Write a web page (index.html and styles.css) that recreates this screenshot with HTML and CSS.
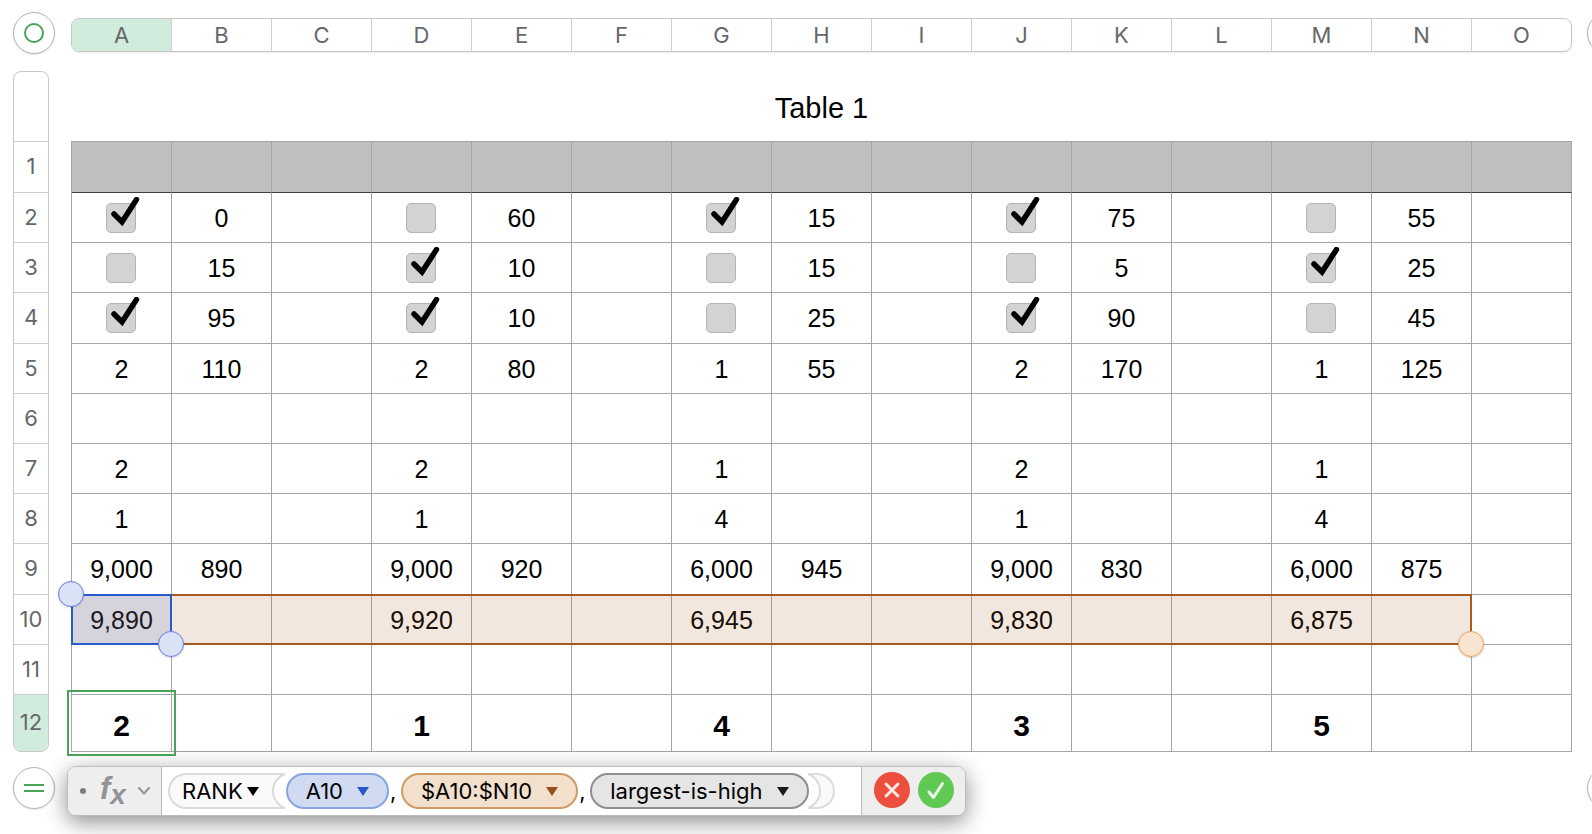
FILE: index.html
```html
<!DOCTYPE html>
<html lang="en">
<head>
<meta charset="utf-8">
<title>Table 1</title>
<link rel="stylesheet" href="styles.css">
</head>
<body>
<svg class="defs" aria-hidden="true">
  <symbol id="tick" viewBox="0 0 36 36"><path d="M8 17L16 25L30.500 2.500" fill="none" stroke="#000" stroke-width="5.500" stroke-linecap="round"/></symbol>
  <symbol id="caret" viewBox="0 0 12 9"><path d="M0 0H12L6 9Z" fill="currentColor"/></symbol>
</svg>
<main class="sheet">
  <button class="corner" aria-label="Select table"><svg width="20" height="20" viewBox="0 0 20 20"><circle cx="10" cy="10" r="9" fill="none" stroke="#4ba35a" stroke-width="2"/></svg></button>
  <div class="columns">
    <span class="active">A</span><span>B</span><span>C</span><span>D</span><span>E</span><span>F</span><span>G</span><span>H</span><span>I</span><span>J</span><span>K</span><span>L</span><span>M</span><span>N</span><span>O</span>
  </div>
  <div class="edge"><button class="corner" aria-label="Add column"></button></div>

  <div class="rows">
    <span class="title-slot"></span><span class="r51">1</span><span>2</span><span>3</span><span class="r51">4</span><span>5</span><span>6</span><span>7</span><span>8</span><span class="r51">9</span><span>10</span><span>11</span><span class="active">12</span>
  </div>
  <table class="grid">
    <caption>Table 1</caption>
    <thead>
      <tr class="r51"><th></th><th></th><th></th><th></th><th></th><th></th><th></th><th></th><th></th><th></th><th></th><th></th><th></th><th></th><th></th></tr>
    </thead>
    <tbody>
      <tr>
        <td class="tick"><label><input type="checkbox" checked aria-label="A2"><svg><use href="#tick"/></svg></label></td><td>0</td><td></td>
        <td class="tick"><label><input type="checkbox" aria-label="D2"><svg><use href="#tick"/></svg></label></td><td>60</td><td></td>
        <td class="tick"><label><input type="checkbox" checked aria-label="G2"><svg><use href="#tick"/></svg></label></td><td>15</td><td></td>
        <td class="tick"><label><input type="checkbox" checked aria-label="J2"><svg><use href="#tick"/></svg></label></td><td>75</td><td></td>
        <td class="tick"><label><input type="checkbox" aria-label="M2"><svg><use href="#tick"/></svg></label></td><td>55</td><td></td>
      </tr>
      <tr>
        <td class="tick"><label><input type="checkbox" aria-label="A3"><svg><use href="#tick"/></svg></label></td><td>15</td><td></td>
        <td class="tick"><label><input type="checkbox" checked aria-label="D3"><svg><use href="#tick"/></svg></label></td><td>10</td><td></td>
        <td class="tick"><label><input type="checkbox" aria-label="G3"><svg><use href="#tick"/></svg></label></td><td>15</td><td></td>
        <td class="tick"><label><input type="checkbox" aria-label="J3"><svg><use href="#tick"/></svg></label></td><td>5</td><td></td>
        <td class="tick"><label><input type="checkbox" checked aria-label="M3"><svg><use href="#tick"/></svg></label></td><td>25</td><td></td>
      </tr>
      <tr class="r51">
        <td class="tick"><label><input type="checkbox" checked aria-label="A4"><svg><use href="#tick"/></svg></label></td><td>95</td><td></td>
        <td class="tick"><label><input type="checkbox" checked aria-label="D4"><svg><use href="#tick"/></svg></label></td><td>10</td><td></td>
        <td class="tick"><label><input type="checkbox" aria-label="G4"><svg><use href="#tick"/></svg></label></td><td>25</td><td></td>
        <td class="tick"><label><input type="checkbox" checked aria-label="J4"><svg><use href="#tick"/></svg></label></td><td>90</td><td></td>
        <td class="tick"><label><input type="checkbox" aria-label="M4"><svg><use href="#tick"/></svg></label></td><td>45</td><td></td>
      </tr>
      <tr><td>2</td><td>110</td><td></td><td>2</td><td>80</td><td></td><td>1</td><td>55</td><td></td><td>2</td><td>170</td><td></td><td>1</td><td>125</td><td></td></tr>
      <tr><td></td><td></td><td></td><td></td><td></td><td></td><td></td><td></td><td></td><td></td><td></td><td></td><td></td><td></td><td></td></tr>
      <tr><td>2</td><td></td><td></td><td>2</td><td></td><td></td><td>1</td><td></td><td></td><td>2</td><td></td><td></td><td>1</td><td></td><td></td></tr>
      <tr><td>1</td><td></td><td></td><td>1</td><td></td><td></td><td>4</td><td></td><td></td><td>1</td><td></td><td></td><td>4</td><td></td><td></td></tr>
      <tr class="r51"><td>9,000</td><td>890</td><td></td><td>9,000</td><td>920</td><td></td><td>6,000</td><td>945</td><td></td><td>9,000</td><td>830</td><td></td><td>6,000</td><td>875</td><td></td></tr>
      <tr class="ranged">
        <td>9,890<span class="range wide"></span><span class="range single"></span></td><td></td><td></td><td>9,920</td><td></td><td></td><td>6,945</td><td></td><td></td><td>9,830</td><td></td><td></td><td>6,875</td><td></td><td></td>
      </tr>
      <tr><td></td><td></td><td></td><td></td><td></td><td></td><td></td><td></td><td></td><td></td><td></td><td></td><td></td><td></td><td></td></tr>
      <tr class="totals"><td class="editing">2</td><td></td><td></td><td>1</td><td></td><td></td><td>4</td><td></td><td></td><td>3</td><td></td><td></td><td>5</td><td></td><td></td></tr>
    </tbody>
  </table>
  <div></div>

  <button class="corner foot" aria-label="Add row"><svg width="20" height="8" viewBox="0 0 20 8"><path d="M0 1H20M0 7H20" stroke="#4ba35a" stroke-width="2"/></svg></button>
  <div class="formula">
    <button class="fx" aria-label="Formula options">
      <span class="dot"></span>
      <span class="fn">f<sub>x</sub></span>
      <svg width="12" height="8" viewBox="0 0 12 8"><path d="M1 1L6 6.500L11 1" fill="none" stroke="#929297" stroke-width="2" stroke-linecap="round" stroke-linejoin="round"/></svg>
    </button>
    <div class="tokens">
      <button class="token func">RANK<svg class="caret"><use href="#caret"/></svg></button>
      <svg class="paren" width="15" height="36" viewBox="0 0 15 36"><path d="M0 1H14A18 18 0 0 0 14 35H0Z" fill="#fafafa"/><path d="M0 1H14A18 18 0 0 0 14 35H0" fill="none" stroke="#dcdcdc" stroke-width="2"/></svg>
      <button class="token ref-a">A10<svg class="caret"><use href="#caret"/></svg></button>
      <span class="comma">,</span>
      <button class="token ref-b">$A10:$N10<svg class="caret"><use href="#caret"/></svg></button>
      <span class="comma">,</span>
      <button class="token option">largest-is-high<svg class="caret"><use href="#caret"/></svg></button>
      <svg class="close" width="28" height="36" viewBox="0 0 28 36"><path d="M0 1H9A17 17 0 0 1 9 35H0A18 18 0 0 0 0 1Z" fill="#fafafa" stroke="#dcdcdc" stroke-width="2"/></svg>
    </div>
    <div class="actions">
      <button class="cancel" aria-label="Cancel"><svg width="36" height="36" viewBox="0 0 36 36"><path d="M12 12L24 24M24 12L12 24" fill="none" stroke="#fbe9e7" stroke-width="3" stroke-linecap="round"/></svg></button>
      <button class="accept" aria-label="Accept"><svg width="36" height="36" viewBox="0 0 36 36"><path d="M11 20L15.500 25.500L24.500 11.500" fill="none" stroke="#eefbec" stroke-width="3" stroke-linecap="round" stroke-linejoin="round"/></svg></button>
    </div>
  </div>
  <div class="edge foot"><button class="corner" aria-label="Resize table"></button></div>
</main>
</body>
</html>
```
FILE: styles.css
```css
* { box-sizing: border-box; }

body {
  margin: 0;
  min-height: 100vh;
  background: #fff;
  color: #000;
  font-family: Inter, "Liberation Sans", sans-serif;
  font-size: 22px;
  overflow: hidden;
}

button {
  margin: 0;
  padding: 0;
  border: 0;
  background: none;
  font: inherit;
  color: inherit;
}

svg { display: block; flex: none; }

.defs { position: absolute; width: 0; height: 0; }

.sheet {
  display: grid;
  grid-template-columns: 58px minmax(0, 1fr) 20px;
  align-items: start;
  padding: 12px 0 18px 13px;
}

.corner {
  display: flex;
  align-items: center;
  justify-content: center;
  flex: none;
  width: 42px;
  height: 42px;
  border: 1px solid #b4b4b4;
  border-radius: 50%;
  background: #fff;
  box-shadow: 0 1px 2px rgba(0, 0, 0, 0.1);
}

.edge { display: flex; padding-left: 15px; }

.foot { margin-top: 15px; }

/* Column and row headings */
.columns {
  display: flex;
  height: 34px;
  margin: 6px 0 13px;
  border: 1px solid #c6c6c6;
  border-radius: 8px;
  overflow: hidden;
  box-shadow: 0 1px 2px rgba(0, 0, 0, 0.08);
  color: #66676b;
}

.columns span {
  flex: 1;
  border-right: 1px solid #cfcfcf;
  line-height: 32px;
  text-align: center;
}

.columns span:last-child { margin-right: -1px; }

.rows {
  display: flex;
  flex-direction: column;
  width: 36px;
  margin-top: 6px;
  border: 1px solid #c6c6c6;
  border-radius: 8px;
  overflow: hidden;
  color: #66676b;
}

.rows span {
  display: flex;
  align-items: center;
  justify-content: center;
  height: 50px;
  padding-bottom: 2px;
  border-bottom: 1px solid #cfcfcf;
}

.rows .r51 { height: 51px; }
.rows .title-slot { height: 70px; }
.rows .active { height: 56px; border-bottom: 0; }

.columns .active,
.rows .active { background: #d1ecdd; }

/* Data grid */
.grid {
  width: 100%;
  margin-top: 6px;
  table-layout: fixed;
  border-collapse: separate;
  border-spacing: 0;
  border: 1px solid #a5a5a5;
  border-width: 1px 0 0 1px;
  font-family: "Liberation Sans", Arial, sans-serif;
  font-size: 25px;
  line-height: 30px;
}

.grid caption {
  height: 70px;
  padding-top: 4px;
  font-size: 29px;
  line-height: 66px;
}

.grid tr { height: 50px; }
.grid .r51 { height: 51px; }

.grid th,
.grid td {
  padding: 0;
  border: 1px solid #a5a5a5;
  border-width: 0 1px 1px 0;
  text-align: center;
  vertical-align: middle;
}

.grid th {
  background: #bdc0bf;
  border-bottom-color: #3f3f3f;
}

.tick label {
  display: block;
  position: relative;
  width: 30px;
  height: 30px;
  margin: 0 auto 0 34px;
}

.tick input {
  display: block;
  appearance: none;
  width: 30px;
  height: 30px;
  margin: 0;
  border: 1px solid #b3b3b3;
  border-radius: 5px;
  background: #d3d3d3;
}

.tick svg {
  position: absolute;
  left: 0;
  bottom: 0;
  width: 36px;
  height: 36px;
  overflow: visible;
  visibility: hidden;
  pointer-events: none;
}

.tick input:checked + svg { visibility: visible; }

/* Referenced ranges */
.ranged { position: relative; }

.range {
  position: absolute;
  top: -1px;
  bottom: 0;
  left: -1px;
  border: 2px solid;
}

.range::before,
.range::after {
  content: "";
  position: absolute;
  width: 24px;
  height: 24px;
  border: 1px solid;
  border-radius: 50%;
  box-shadow: 0 1px 2px rgba(0, 0, 0, 0.15);
}

.range::before { top: -15px; left: -15px; }
.range::after { right: -14px; bottom: -14px; }

.wide {
  width: calc(100% * 14 / 15 + 1px);
  border-color: #a65b22;
  background: rgba(166, 91, 34, 0.15);
}

.wide::before { display: none; }
.wide::after { border-color: #f0a25a; background: #f8e4d1; }

.single {
  width: calc(100% / 15 + 1px);
  border-color: #2a5bcb;
  background: rgba(42, 91, 203, 0.14);
}

.single::before,
.single::after { border-color: #6f7be6; background: #d9e3f6; }

.grid .totals { height: 57px; }

.grid .totals td {
  padding-top: 6px;
  font-size: 30px;
  font-weight: 700;
}

.editing { position: relative; }

.editing::after {
  content: "";
  position: absolute;
  inset: -5px;
  border: 2px solid #4ba35a;
}

/* Formula editor */
.formula {
  display: flex;
  justify-self: start;
  height: 50px;
  margin: 14px 0 0 -4px;
  border: 1px solid #bdbdbd;
  border-radius: 9px;
  background: #fff;
  box-shadow: 0 6px 22px rgba(0, 0, 0, 0.45);
}

.fx,
.actions {
  display: flex;
  align-items: center;
  background: #eee;
}

.fx {
  gap: 12px;
  padding: 0 11px 0 12px;
  border-right: 1px solid #bdbdbd;
  border-radius: 8px 0 0 8px;
  color: #929297;
}

.dot {
  width: 6px;
  height: 6px;
  border-radius: 50%;
  background: #7d7d80;
}

.fn {
  width: 28px;
  padding: 0 0 4px 2px;
  font: italic 700 31px/32px "Liberation Sans", Arial, sans-serif;
  text-align: left;
  white-space: nowrap;
}

.fn sub {
  font-size: 28px;
  line-height: 0;
  vertical-align: -5px;
}

.tokens {
  display: flex;
  align-items: center;
  padding: 0 25px 0 6px;
}

.token {
  display: flex;
  align-items: center;
  height: 36px;
  gap: 14px;
  padding: 0 18px;
  border: 2px solid;
  border-radius: 18px;
  white-space: nowrap;
}

.caret { width: 12px; height: 9px; }

.func {
  gap: 4px;
  padding: 0 12px;
  border-color: #dcdcdc;
  border-right: 0;
  border-radius: 18px 0 0 18px;
  background: #fafafa;
}

.ref-a { border-color: #88a4e0; background: #d0dbf2; }
.ref-a .caret { color: #2857c7; }
.ref-b { border-color: #cf9a66; background: #f3e0cc; }
.ref-b .caret { color: #954d1b; }
.option { border-color: #8e8e8e; background: #e5e5e5; }
.option .caret { color: #1a1a1a; }

.comma { width: 12px; padding-left: 1px; }

.close { margin-left: -1px; }

.actions {
  gap: 8px;
  padding: 0 11px 2px 12px;
  border-left: 1px solid #bdbdbd;
  border-radius: 0 8px 8px 0;
}

.actions button { border-radius: 50%; }
.cancel { background: #ed4e3d; }
.accept { background: #5fc954; }
```
